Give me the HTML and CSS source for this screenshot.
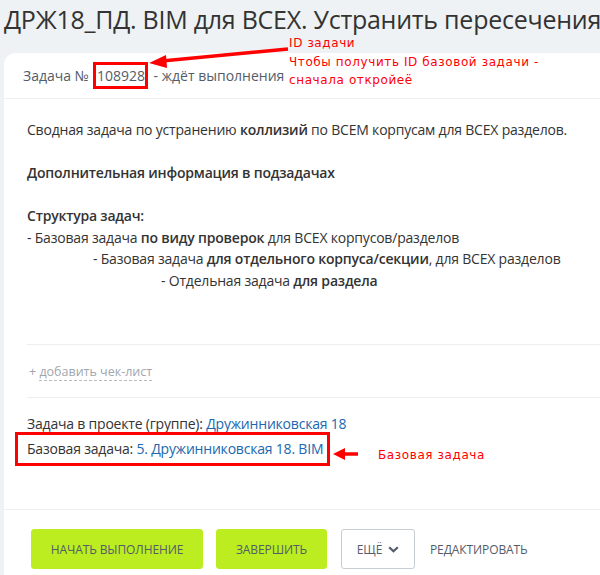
FILE: index.html
```html
<!DOCTYPE html>
<html lang="ru">
<head>
<meta charset="utf-8">
<link rel="stylesheet" href="styles.css">
</head>
<body>
<h1 class="title">ДРЖ18_ПД. BIM для ВСЕХ. Устранить пересечения</h1>
<div class="card">
  <div class="card-head">Задача №<span class="task-id">108928</span> - ждёт выполнения</div>
  <div class="card-body">
    <div class="desc">
      <p>Сводная задача по устранению <b>коллизий</b> по ВСЕМ корпусам для ВСЕХ разделов.</p>
      <p><b>Дополнительная информация в подзадачах</b></p>
      <p><b>Структура задач:</b><br>
      - Базовая задача <b>по виду проверок</b> для ВСЕХ корпусов/разделов<br>
      <span class="ind1"></span>- Базовая задача <b>для отдельного корпуса/секции</b>, для ВСЕХ разделов<br>
      <span class="ind2"></span>- Отдельная задача <b>для раздела</b></p>
    </div>
    <div class="checklist"><span class="plus">+</span> <span class="dash">добавить чек-лист</span></div>
    <div class="meta">
      <div class="meta-row">Задача в проекте (группе): <a class="link">Дружинниковская 18</a></div>
      <div class="meta-row base">Базовая задача: <a class="link">5. Дружинниковская 18. BIM</a></div>
    </div>
  </div>
  <div class="card-foot">
    <button class="btn btn-lime btn-start">НАЧАТЬ ВЫПОЛНЕНИЕ</button>
    <button class="btn btn-lime btn-finish">ЗАВЕРШИТЬ</button>
    <button class="btn btn-more">ЕЩЁ <svg class="chev" width="11" height="7" viewBox="0 0 11 7"><path d="M1.2 1.2 L5.5 5.3 L9.8 1.2" fill="none" stroke="#535c69" stroke-width="2.2"/></svg></button>
    <button class="btn btn-edit">РЕДАКТИРОВАТЬ</button>
  </div>
</div>

<div class="note note-id">ID задачи<br>Чтобы получить ID базовой задачи -<br>сначала откройеё</div>
<div class="note note-base">Базовая задача</div>
<svg class="arrows" width="600" height="575" viewBox="0 0 600 575">
  <line x1="288" y1="49" x2="162" y2="61" stroke="#ff0000" stroke-width="3.5"/>
  <polygon points="149,63 166,55 167,68" fill="#ff0000"/>
  <line x1="358" y1="454" x2="342" y2="454" stroke="#ff0000" stroke-width="3.5"/>
  <polygon points="333,454 345,448 345,460" fill="#ff0000"/>
</svg>
</body>
</html>
```

FILE: styles.css
```css
html, body { margin: 0; padding: 0; }
body {
  background: #eef2f4;
  font-family: "Open Sans", "Noto Sans", sans-serif;
  color: #333;
  width: 600px;
  height: 575px;
  overflow: hidden;
  position: relative;
}
.title {
  margin: 0;
  padding: 3px 0 0 4px;
  height: 53px;
  box-sizing: border-box;
  font-weight: 400;
  font-size: 25px;
  line-height: 32px;
  color: #333;
  white-space: nowrap;
  letter-spacing: -0.25px;
}
.card {
  margin-left: 4px;
  background: #fff;
  border-radius: 12px 0 0 0;
  height: 522px;
}
.card-head {
  height: 46px;
  box-sizing: border-box;
  border-bottom: 1px solid #edeef0;
  padding: 12px 0 0 19px;
  font-size: 14px;
  line-height: 22px;
  color: #535c69;
  letter-spacing: 0;
}
.task-id {
  display: inline-block;
  box-sizing: border-box;
  border: 3px solid #ff0000;
  height: 27px;
  width: 55px;
  line-height: 21px;
  padding: 0 0 0 1px;
  margin-left: 4px;
  vertical-align: top;
  margin-top: -3px;
  margin-right: 2px;
}
.card-body {
  padding: 0 0 0 23px;
  height: 411px;
  box-sizing: border-box;
  border-bottom: 1px solid #edeef0;
}
.desc {
  font-size: 14px;
  line-height: 21.5px;
  color: #333;
  padding: 20px 0 0 0;
  height: 246px;
  box-sizing: border-box;
  border-bottom: 1px solid #edeef0;
  letter-spacing: -0.2px;
}
.desc p { margin: 0 0 21.5px 0; }
.desc b { font-weight: 600; }
.ind1 { display: inline-block; width: 66px; }
.ind2 { display: inline-block; width: 134px; }
.checklist {
  height: 53px;
  box-sizing: border-box;
  border-bottom: 1px solid #edeef0;
  padding: 17px 0 0 2px;
  font-size: 12.5px;
  line-height: 20px;
  color: #a0a6ad;
}
.dash {
  border-bottom: 1px dashed #b8bcc1;
}
.meta {
  padding-top: 16px;
  font-size: 14px;
  color: #333;
  letter-spacing: -0.2px;
}
.meta-row { height: 20px; line-height: 20px; }
.link { color: #2067b0; text-decoration: none; }
.base {
  margin-left: -12px;
  margin-top: -2px;
  display: inline-block;
  border: 3px solid #ff0000;
  padding: 0 4px 0 9px;
  height: 34px;
  line-height: 28px;
  box-sizing: border-box;
}
.card-foot {
  display: flex;
  align-items: center;
  padding: 19px 0 0 27px;
}
.btn {
  font-family: "Open Sans", "Noto Sans", sans-serif;
  font-size: 12px;
  font-weight: 500;
  color: #535c69;
  height: 40px;
  border-radius: 3px;
  border: 1px solid transparent;
  background: none;
  padding: 0;
  letter-spacing: -0.1px;
}
.btn-lime { background: #bbed21; border-color: #bbed21; }
.btn-start { width: 172px; }
.btn-finish { width: 111px; margin-left: 13px; }
.btn-more {
  width: 74px;
  margin-left: 14px;
  border-color: #c6cdd3;
  background: #fff;
  display: inline-flex;
  align-items: center;
  justify-content: center;
  gap: 6px;
}
.btn-edit { margin-left: 14px; }
.note {
  position: absolute;
  color: #ff0000;
  font-family: "DejaVu Sans", sans-serif;
  font-size: 12px;
  letter-spacing: 0.6px;
}
.note-id { left: 289px; top: 34px; line-height: 18.5px; }
.note-base { left: 378px; top: 447px; line-height: 16px; }
.arrows { position: absolute; left: 0; top: 0; pointer-events: none; }
```
